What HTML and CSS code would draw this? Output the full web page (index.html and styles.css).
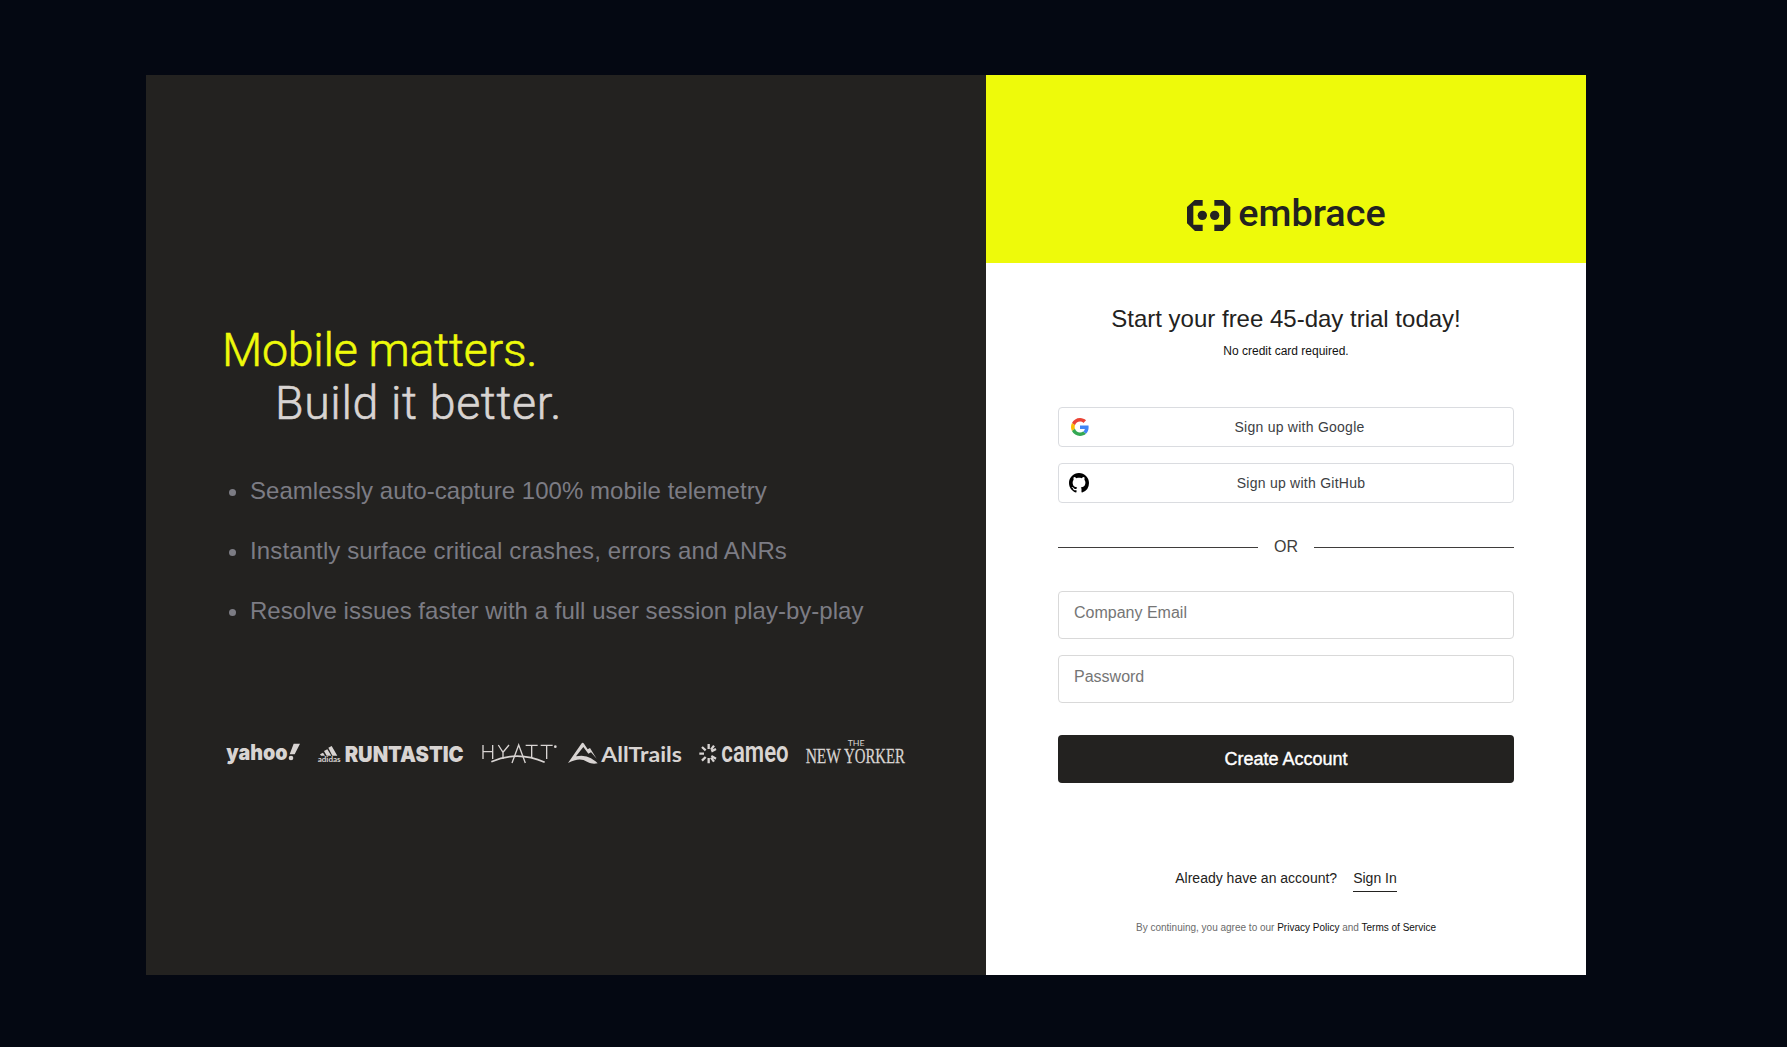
FILE: index.html
```html
<!DOCTYPE html>
<html lang="en">
<head>
<meta charset="utf-8">
<title>Embrace – Sign up</title>
<link rel="stylesheet" href="styles.css">
</head>
<body>
<main class="card">
  <section class="promo">
    <h1 class="headline"><span class="headline-top">Mobile matters.</span><span class="headline-sub">Build it better.</span></h1>
    <ul class="features">
      <li><span class="f1">Seamlessly auto-capture 100% mobile telemetry</span></li>
      <li><span class="f2">Instantly surface critical crashes, errors and ANRs</span></li>
      <li><span class="f3">Resolve issues faster with a full user session play-by-play</span></li>
    </ul>
    <div class="logos">
      <svg class="logo yahoo" width="75" height="36" viewBox="33 12 225 108">
        <text x="34" y="86" font-size="65" textLength="184" lengthAdjust="spacingAndGlyphs" class="inter">yahoo</text>
        <path d="M236 38h19l-16 32h-15zM228 74a7 7 0 1 1 0 14 7 7 0 0 1 0-14z"/>
      </svg>
      <svg class="logo runtastic" width="148" height="36" viewBox="306 12 444 108">
        <path d="M340 50l10-5 17 29h-15zM327 60l10-5 12 19h-14zM315 70l9-5 6 9h-12z"/>
        <text x="308" y="92" font-size="22" textLength="69" lengthAdjust="spacingAndGlyphs" class="trail">adidas</text>
        <text x="389" y="92" font-size="64" textLength="357" lengthAdjust="spacingAndGlyphs" class="inter">RUNTASTIC</text>
      </svg>
      <svg class="logo hyatt" width="76" height="36" viewBox="801 12 228 108">
        <g fill="none" stroke="currentColor" stroke-width="4"><path d="M804 42v42M833 42v42M804 62h29M850 42l14 22M882 42l-18 22v20M891 96l20-54 20 54M932 43h36M950 43v37M977 43h36M995 43v41"/><path d="M829 92q80-34 160 2" stroke-width="5"/></g>
        <circle cx="1021" cy="47" r="4"/>
      </svg>
      <svg class="logo alltrails" width="115" height="36" viewBox="24 12 345 108">
        <path d="M24 96L64 38q4-5 8 0l11 17 7-4 20 32q-9-10-17-19l-8 4-15-20-22 28q28-5 45 6 17 11 20 15-18 4-32-5-22-15-57 4z"/>
        <text x="124" y="93" font-size="64" textLength="242" lengthAdjust="spacingAndGlyphs" class="trail">AllTrails</text>
      </svg>
      <svg class="logo cameo" width="90" height="36" viewBox="417 12 270 108">
        <g stroke="currentColor" stroke-width="7"><path d="M446 39v15M446 81v16M418 68h14M454 61l14-7M426 48l11 10M454 75l14 8M426 89l11-11M453 56l9-12M453 80l9 12"/></g>
        <text x="484" y="93" font-size="91" textLength="202" lengthAdjust="spacingAndGlyphs" class="rounded">cameo</text>
      </svg>
      <svg class="logo newyorker" width="102" height="36" viewBox="735 12 306 108">
        <text x="863" y="45" font-size="25" textLength="51" lengthAdjust="spacingAndGlyphs" class="lato">THE</text>
        <text x="737" y="96" font-size="65" textLength="106" lengthAdjust="spacingAndGlyphs" class="serif">NEW</text>
        <text x="852" y="96" font-size="65" textLength="183" lengthAdjust="spacingAndGlyphs" class="serif">YORKER</text>
      </svg>
    </div>
  </section>
  <section class="signup">
    <header class="brand">
      <svg width="200" height="36" viewBox="51 55 600 108">
        <path d="M74 58h24v17H70v57h28v19H75L51 128V79zM133 58h26l22 21v49l-23 23h-25v-19h29V75h-29z"/>
        <circle cx="97" cy="104" r="14"/><circle cx="134" cy="104" r="14"/>
        <text x="205" y="135" font-size="110" textLength="442" lengthAdjust="spacingAndGlyphs">embrace</text>
      </svg>
    </header>
    <div class="panel">
      <h2 class="title"><span>Start your free 45-day trial today!</span></h2>
      <p class="subtitle"><span>No credit card required.</span></p>
      <div class="social">
        <button class="oauth" type="button">
          <svg class="google" width="18" height="18" viewBox="0 0 48 48"><path fill="#EA4335" d="M24 9.5c3.54 0 6.71 1.22 9.21 3.6l6.85-6.85C35.9 2.38 30.47 0 24 0 14.62 0 6.51 5.38 2.56 13.22l7.98 6.19C12.43 13.72 17.74 9.5 24 9.5z"/><path fill="#4285F4" d="M46.98 24.55c0-1.57-.15-3.09-.38-4.55H24v9.02h12.94c-.58 2.96-2.26 5.48-4.78 7.18l7.73 6c4.51-4.18 7.09-10.36 7.09-17.65z"/><path fill="#FBBC05" d="M10.53 28.59c-.48-1.45-.76-2.99-.76-4.59s.27-3.14.76-4.59l-7.98-6.19C.92 16.46 0 20.12 0 24c0 3.88.92 7.54 2.56 10.78l7.97-6.19z"/><path fill="#34A853" d="M24 48c6.48 0 11.93-2.13 15.89-5.81l-7.73-6c-2.15 1.45-4.92 2.3-8.16 2.3-6.26 0-11.57-4.22-13.47-9.91l-7.98 6.19C6.51 42.62 14.62 48 24 48z"/></svg>
          <span class="oauth-text"><span>Sign up with Google</span></span>
        </button>
        <button class="oauth" type="button">
          <svg class="github" width="20" height="20" viewBox="0 0 16 16"><path d="M8 0C3.58 0 0 3.58 0 8c0 3.54 2.29 6.53 5.47 7.59.4.07.55-.17.55-.38 0-.19-.01-.82-.01-1.49-2.01.37-2.53-.49-2.69-.94-.09-.23-.48-.94-.82-1.13-.28-.15-.68-.52-.01-.53.63-.01 1.08.58 1.23.82.72 1.21 1.87.87 2.33.66.07-.52.28-.87.51-1.07-1.78-.2-3.64-.89-3.64-3.95 0-.87.31-1.59.82-2.15-.08-.2-.36-1.02.08-2.12 0 0 .67-.21 2.2.82.64-.18 1.32-.27 2-.27s1.36.09 2 .27c1.53-1.04 2.2-.82 2.2-.82.44 1.1.16 1.92.08 2.12.51.56.82 1.27.82 2.15 0 3.07-1.87 3.75-3.65 3.95.29.25.54.73.54 1.48 0 1.07-.01 1.93-.01 2.2 0 .21.15.46.55.38A8.01 8.01 0 0 0 16 8c0-4.42-3.58-8-8-8z"/></svg>
          <span class="oauth-text wide"><span>Sign up with GitHub</span></span>
        </button>
      </div>
      <div class="divider"><span>OR</span></div>
      <form class="form">
        <input class="field" type="email" placeholder="Company Email">
        <input class="field" type="password" placeholder="Password">
        <button class="submit" type="button">Create Account</button>
      </form>
      <p class="signin"><span>Already have an account?</span><a>Sign In</a></p>
      <p class="legal"><span>By continuing, you agree to our <a>Privacy Policy</a> and <a>Terms of Service</a></span></p>
    </div>
  </section>
</main>
</body>
</html>
```
FILE: styles.css
```css
* { box-sizing: border-box; }
body {
  margin: 0;
  padding: 75px 146px 72px;
  background: #040812;
  font-family: "Liberation Sans", Arial, sans-serif;
}
h1, h2, p, ul { margin: 0; padding: 0; font-weight: 400; }
.card {
  display: grid;
  grid-template-columns: 840px 600px;
  width: 1440px;
  height: 900px;
}
.promo { background: #232220; padding: 249px 0 0 80px; }
.headline {
  display: flex;
  flex-direction: column;
  font: 300 46.5px/53px Roboto, sans-serif;
  -webkit-text-stroke: 0.6px currentColor;
}
.headline-top { color: #eefa0a; margin-left: -4px; letter-spacing: -0.25px; }
.headline-sub { color: #d8d4d2; padding-left: 49px; letter-spacing: 0.65px; }
.features {
  display: flex;
  flex-direction: column;
  gap: 32px;
  margin-top: 47px;
  list-style: none;
  color: #7c7c84;
  font-size: 24px;
  line-height: 28px;
}
.features li { display: flex; align-items: center; gap: 14px; white-space: nowrap; }
.features li::before {
  content: "";
  width: 7px;
  height: 7px;
  margin: 3px 0 0 3px;
  border-radius: 50%;
  background: currentColor;
}
.f1 { letter-spacing: 0.04px; }
.f2 { letter-spacing: 0.12px; }
.f3 { letter-spacing: 0.02px; }
.logos { display: flex; align-items: center; margin-top: 110px; color: #d8d4d2; }
.logo { fill: currentColor; flex: none; overflow: visible; }
.runtastic { margin-left: 16px; }
.hyatt { margin-left: 17px; }
.alltrails { margin-left: 10px; }
.cameo, .newyorker { margin-left: 16px; }
.inter { font-family: Inter, sans-serif; font-weight: 900; }
.trail { font-family: Lato, sans-serif; font-weight: 700; }
.rounded { font-family: Roboto, sans-serif; font-weight: 600; }
.lato { font-family: Lato, sans-serif; font-weight: 400; }
.serif { font-family: "Liberation Serif", serif; stroke: currentColor; stroke-width: 0.8px; }
.signup { background: #fff; }
.brand {
  display: flex;
  align-items: flex-end;
  justify-content: center;
  height: 188px;
  padding: 0 0 28px 2px;
  background: #eefa0a;
  fill: #232220;
}
.brand svg { overflow: visible; }
.brand text { font-family: Roboto, sans-serif; font-weight: 500; }
.panel { padding: 42px 72px 0; color: #232220; }
.title { font-size: 24px; line-height: 28px; text-align: center; white-space: nowrap; }
.subtitle { margin-top: 11px; font-size: 12px; line-height: 14px; text-align: center; color: #111; }
.social { display: flex; flex-direction: column; gap: 16px; margin-top: 49px; }
.oauth {
  display: flex;
  align-items: center;
  height: 40px;
  padding: 0 11px 0 12px;
  border: 1px solid #dadce0;
  border-radius: 4px;
  background: #fff;
  color: #3c4043;
  font: 14px/20px "Liberation Sans", Arial, sans-serif;
  letter-spacing: 0.25px;
}
.github { margin-left: -2px; fill: #000; }
.oauth-text { flex: 1; padding-left: 8px; text-align: center; }
.oauth-text.wide { padding-left: 11px; }
.divider { display: flex; align-items: center; gap: 16px; margin-top: 32px; height: 24px; color: #3f3d3b; }
.divider::before, .divider::after { content: ""; flex: none; width: 200px; height: 1px; margin-top: 1px; background: #3f3d3b; }
.divider span { width: 24px; text-align: center; font-size: 16px; line-height: 18px; }
.form { display: flex; flex-direction: column; gap: 16px; margin-top: 32px; }
.field {
  height: 48px;
  padding: 0 15px 5px;
  border: 1px solid #d9d9d9;
  border-radius: 4px;
  font: 16px "Liberation Sans", Arial, sans-serif;
}
.field::placeholder { color: #757575; }
.submit {
  height: 48px;
  margin-top: 16px;
  border: 0;
  border-radius: 4px;
  background: #232220;
  color: #fff;
  font: 18px "Liberation Sans", Arial, sans-serif;
  -webkit-text-stroke: 0.4px #fff;
}
.signin { display: flex; justify-content: center; gap: 16px; margin-top: 87px; font-size: 14px; line-height: 16px; }
.signin a { padding-bottom: 5px; border-bottom: 1px solid #232220; }
.legal { margin-top: 30px; font-size: 10px; line-height: 12px; text-align: center; color: #6b6b6b; white-space: nowrap; }
.legal a { color: #111; }
```
